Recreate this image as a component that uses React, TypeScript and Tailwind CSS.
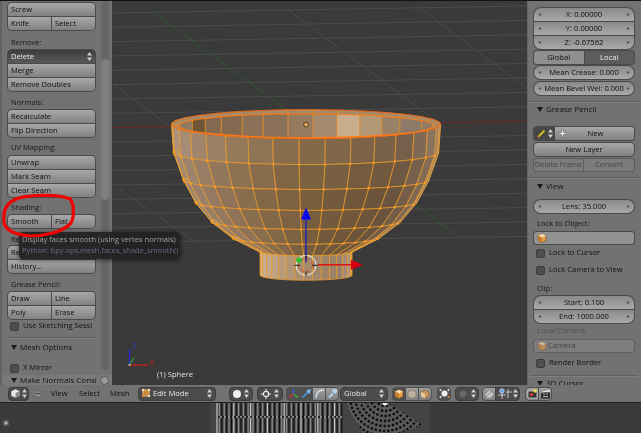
import React from "react";

const BTN = "bg-gradient-to-b from-[#a8a8a8] to-[#828282]";
const NUM = "bg-gradient-to-b from-[#8a8a8a] to-[#a9a9a9]";

function Group({ className = "", children }: { className?: string; children: React.ReactNode }) {
  return (
    <div className={`flex flex-col gap-px bg-[#4a4a4a] rounded-[4px] ring-1 ring-[#4a4a4a] overflow-hidden ${className}`}>
      {children}
    </div>
  );
}

function Btn({ children, center, className = "" }: { children?: React.ReactNode; center?: boolean; className?: string }) {
  return (
    <div
      className={`h-[13px] min-w-0 flex items-center whitespace-nowrap overflow-hidden ${BTN} text-[#0c0c0c] ${
        center ? "justify-center" : "pl-[3px]"
      } ${className}`}
    >
      {children}
    </div>
  );
}

function Row({ children }: { children: React.ReactNode }) {
  return <div className="grid grid-cols-2 gap-px">{children}</div>;
}

function Label({ className = "", children }: { className?: string; children: React.ReactNode }) {
  return <div className={`h-[10px] leading-[10px] pl-[3px] text-[#151515] whitespace-nowrap ${className}`}>{children}</div>;
}

function Check({ className = "", children }: { className?: string; children: React.ReactNode }) {
  return (
    <div className={`h-[10px] flex items-center gap-[4px] text-[#111] whitespace-nowrap ${className}`}>
      <span className="w-[9px] h-[9px] shrink-0 rounded-[2px] bg-[#4e4e4e] border border-[#3c3c3c]" />
      {children}
    </div>
  );
}

function Sep({ className = "" }: { className?: string }) {
  return <div className={`h-px bg-[#5f5f5f] border-b border-[#7f7f7f] box-content ${className}`} />;
}

function Tri() {
  return (
    <svg width="6" height="6" viewBox="0 0 6 6" className="shrink-0">
      <path d="M0 1H6L3 6Z" fill="#1a1a1a" />
    </svg>
  );
}

function Header({ className = "", children }: { className?: string; children: React.ReactNode }) {
  return (
    <div className={`h-[12px] flex items-center gap-[3px] text-[8px] text-[#111] whitespace-nowrap ${className}`}>
      <Tri />
      {children}
    </div>
  );
}

function Num({ children, className = "" }: { children: React.ReactNode; className?: string }) {
  return (
    <div className={`h-[13px] flex items-center justify-between px-[4px] ${NUM} text-[#0c0c0c] whitespace-nowrap ${className}`}>
      <span className="text-[6px] text-[#555]">◂</span>
      <span>{children}</span>
      <span className="text-[6px] text-[#555]">▸</span>
    </div>
  );
}

function Cube({ size = 10, dim = false }: { size?: number; dim?: boolean }) {
  return (
    <svg width={size} height={size} viewBox="0 0 10 10" className={`shrink-0 ${dim ? "opacity-60" : ""}`}>
      <path d="M5 .8 9 2.6V7.4L5 9.4 1 7.4V2.6Z" fill="#e8a04a" stroke="#6b4a20" strokeWidth=".6" />
      <path d="M5 .8 9 2.6 5 4.6 1 2.6Z" fill="#f5dcb4" />
      <path d="M1 2.6 5 4.6V9.4L1 7.4Z" fill="#c97f2d" />
    </svg>
  );
}

function UpDown({ color = "#cfcfcf" }: { color?: string }) {
  return (
    <svg width="5" height="9" viewBox="0 0 5 9" className="shrink-0">
      <path d="M2.5 0 5 3.4H0Z M2.5 9 5 5.6H0Z" fill={color} />
    </svg>
  );
}

const D = "h-[14px] shrink-0 rounded-[4px] bg-[#4c4c4c] border border-[#3e3e3e] flex items-center";
const T = "h-[14px] w-[14px] shrink-0 flex items-center justify-center bg-gradient-to-b from-[#a0a0a0] to-[#808080] border border-[#4f4f4f]";

function LeftPanel() {
  return (
    <div className="w-[112px] h-full flex flex-col bg-[#727272] overflow-hidden border-l-2 border-[#626262]">
      <div className="flex-1 min-h-0 flex overflow-hidden">
        <div className="w-[94px] pl-[6px] pt-[2px] shrink-0 overflow-hidden">
          <Group className="w-[87px]">
            <Btn>Screw</Btn>
            <Row>
              <Btn>Knife</Btn>
              <Btn>Select</Btn>
            </Row>
          </Group>
          <Label className="mt-[7px]">Remove:</Label>
          <Group className="w-[87px] mt-[3px]">
            <div className="h-[13px] flex items-center justify-between px-[3px] bg-gradient-to-b from-[#3d3d3d] to-[#5a5a5a] text-[#eee]">
              Delete
              <UpDown />
            </div>
            <Btn>Merge</Btn>
            <Btn>Remove Doubles</Btn>
          </Group>
          <Label className="mt-[6px]">Normals:</Label>
          <Group className="w-[87px] mt-[3px]">
            <Btn>Recalculate</Btn>
            <Btn>Flip Direction</Btn>
          </Group>
          <Label className="mt-[5px]">UV Mapping:</Label>
          <Group className="w-[87px] mt-[4px]">
            <Btn>Unwrap</Btn>
            <Btn>Mark Seam</Btn>
            <Btn>Clear Seam</Btn>
          </Group>
          <Label className="mt-[5px]">Shading:</Label>
          <Group className="w-[87px] mt-[3px]">
            <Row>
              <Btn>Smooth</Btn>
              <Btn>Flat</Btn>
            </Row>
          </Group>
          <Label className="mt-[6px]">Re</Label>
          <Group className="w-[87px] mt-[2px]">
            <Btn>Re</Btn>
            <Btn>History...</Btn>
          </Group>
          <Label className="mt-[6px]">Grease Pencil:</Label>
          <Group className="w-[87px] mt-[3px]">
            <Row>
              <Btn>Draw</Btn>
              <Btn>Line</Btn>
            </Row>
            <Row>
              <Btn>Poly</Btn>
              <Btn>Erase</Btn>
            </Row>
          </Group>
          <Check className="mt-[2px] pl-[2px]">Use Sketching Sessi</Check>
          <Sep className="mt-[6px] -ml-[2px] w-[92px]" />
          <Header className="mt-[2px] pl-[3px]">Mesh Options</Header>
          <Check className="mt-[10px] pl-[2px]">X Mirror</Check>
        </div>
        <div className="w-[8px] ml-[5px] h-[369px] rounded-[4px] bg-[#666666] overflow-hidden pt-[58px] shrink-0">
          <div className="h-[141px] rounded-[4px] bg-[#7f7f7f]" />
        </div>
      </div>
      <div className="h-[10px] shrink-0 flex items-center gap-[3px] pl-[9px] pr-[3px] bg-[#7a7a7a] text-[8px] text-[#111] whitespace-nowrap overflow-hidden">
        <Tri />
        <span className="flex-1">Make Normals Consi</span>
        <span className="w-[9px] h-[9px] rounded-full bg-[#9a9a9a] border border-[#555] shrink-0" />
      </div>
    </div>
  );
}

function RightPanel() {
  return (
    <div className="w-[114px] h-full bg-[#727272] pl-[6px] pr-[6px] pt-[7px] overflow-hidden border-l border-[#666]">
      <Group className="w-[100px] rounded-[7px]">
        <Num>X: 0.00000</Num>
        <Num>Y: 0.00000</Num>
        <Num>Z: -0.67562</Num>
      </Group>
      <div className="flex gap-px bg-[#4a4a4a] rounded-[3px] ring-1 ring-[#4a4a4a] overflow-hidden mt-[2px] w-[100px]">
        <div className="h-[13px] flex-1 flex items-center justify-center bg-[#8f8f8f] text-[#0c0c0c]">Global</div>
        <div className="h-[13px] flex-1 flex items-center justify-center bg-[#5c5c5c] text-[#eee]">Local</div>
      </div>
      <Group className="w-[100px] rounded-[7px] mt-[2px]">
        <Num>Mean Crease: 0.000</Num>
      </Group>
      <Group className="w-[100px] rounded-[7px] mt-[3px]">
        <Num>Mean Bevel Wei: 0.000</Num>
      </Group>
      <Sep className="mt-[6px] -ml-[4px] w-[108px]" />
      <Header className="pl-[3px]">Grease Pencil</Header>
      <div className="flex ring-1 ring-[#4a4a4a] rounded-[3px] overflow-hidden w-[100px] mt-[12px] h-[13px]">
        <div className="w-[21px] flex items-center justify-center gap-[2px] bg-[#474747]">
          <svg width="9" height="9" viewBox="0 0 9 9">
            <path d="M1 8 7.5 1.5" stroke="#c8c020" strokeWidth="2" />
            <path d="M1 8 2 6" stroke="#e06050" strokeWidth="1.4" />
          </svg>
          <UpDown />
        </div>
        <div className={`flex-1 flex items-center ${BTN} text-[#0c0c0c]`}>
          <svg width="9" height="9" viewBox="0 0 9 9" className="ml-[3px]">
            <path d="M3.5.8H5.5V3.5H8.2V5.5H5.5V8.2H3.5V5.5H.8V3.5H3.5Z" fill="#eee" stroke="#444" strokeWidth=".5" />
          </svg>
          <span className="flex-1 text-center pr-[10px]">New</span>
        </div>
      </div>
      <Group className="w-[100px] mt-[3px]">
        <Btn center>New Layer</Btn>
      </Group>
      <div className="flex gap-px w-[100px] mt-[3px] ring-1 ring-[#5c5c5c] rounded-[3px] overflow-hidden bg-[#5c5c5c]">
        <div className="h-[12px] w-[49px] flex items-center justify-center bg-[#7c7c7c] text-[#444] whitespace-nowrap">Delete Frame</div>
        <div className="h-[12px] flex-1 flex items-center justify-center bg-[#7c7c7c] text-[#444]">Convert</div>
      </div>
      <Sep className="mt-[6px] -ml-[4px] w-[108px]" />
      <Header className="mt-[1px] pl-[3px]">View</Header>
      <Group className="w-[100px] rounded-[7px] mt-[8px]">
        <Num>Lens: 35.000</Num>
      </Group>
      <Label className="mt-[5px]">Lock to Object:</Label>
      <div className="mt-[4px] w-[100px] h-[12px] rounded-[3px] ring-1 ring-[#4a4a4a] bg-[#929292] flex items-center pl-[3px]">
        <Cube />
      </div>
      <Check className="mt-[4px] pl-[2px]">Lock to Cursor</Check>
      <Check className="mt-[7px] pl-[2px]">Lock Camera to View</Check>
      <Label className="mt-[8px]">Clip:</Label>
      <Group className="w-[100px] rounded-[7px] mt-[3px]">
        <Num>Start: 0.100</Num>
        <Num>End: 1000.000</Num>
      </Group>
      <Label className="mt-[2px] text-[#505050]">Local Camera:</Label>
      <div className="mt-[5px] w-[100px] h-[12px] rounded-[3px] ring-1 ring-[#5f5f5f] bg-[#7d7d7d] flex items-center gap-[1px] pl-[3px] text-[#444]">
        <Cube dim />
        Camera
      </div>
      <Check className="mt-[6px] pl-[2px]">Render Border</Check>
      <Sep className="mt-[7px] -ml-[4px] w-[108px]" />
      <Header className="pl-[3px]">3D Cursor</Header>
    </div>
  );
}

const SEG = 32;
const CX = 306;
const ang = (k: number) => ((-3 + 11.25 * k) * Math.PI) / 180;
const RINGS = [
  { r: 135, cy: 123.5, ry: 14.5 },
  { r: 133, cy: 152, ry: 12 },
  { r: 123, cy: 180, ry: 9 },
  { r: 111, cy: 202, ry: 8 },
  { r: 95, cy: 221, ry: 8 },
  { r: 74, cy: 237, ry: 7 },
  { r: 46, cy: 251.5, ry: 4 },
  { r: 46, cy: 275, ry: 5 },
];

const pt = (ring: { r: number; cy: number; ry: number }, k: number): [number, number] => {
  const a = ang(k);
  return [CX + ring.r * Math.sin(a), ring.cy + ring.ry * Math.cos(a)];
};

const STOPS: [number, number[]][] = [
  [-100, [176, 150, 126]],
  [-60, [156, 130, 106]],
  [-30, [140, 112, 82]],
  [0, [124, 97, 66]],
  [30, [114, 90, 62]],
  [50, [110, 88, 68]],
  [70, [130, 108, 88]],
  [100, [164, 140, 118]],
];

function faceColor(deg: number, ringIdx: number) {
  let c = STOPS[STOPS.length - 1][1];
  for (let i = 0; i < STOPS.length - 1; i++) {
    const [d0, c0] = STOPS[i];
    const [d1, c1] = STOPS[i + 1];
    if (deg >= d0 && deg <= d1) {
      const t = (deg - d0) / (d1 - d0);
      c = c0.map((v, j) => v + (c1[j] - v) * t);
      break;
    }
  }
  const boost = ringIdx === 6 ? 42 : ringIdx === 0 ? 8 : ringIdx >= 2 ? -4 : 0;
  return `rgb(${c.map((v) => Math.round(v + boost)).join(",")})`;
}

const INNER = { r: 127, cy: 125, ry: 12 };
const INNER_X = [177, 192, 205, 221, 242, 263, 288, 313, 337, 360, 382, 400, 422, 437];
const INNER_C = ["#8e7a62", "#6f5636", "#846950", "#846950", "#8c7158", "#8a7158", "#957a5d", "#a58a6d", "#c9ae8e", "#b39878", "#9a8268", "#8d7a68", "#8d7a68"];

function Bowl() {
  const faces: React.ReactNode[] = [];
  const edges: React.ReactNode[] = [];
  const dots: React.ReactNode[] = [];
  for (let i = 0; i < RINGS.length - 1; i++) {
    for (let k = 0; k < SEG; k++) {
      const mid = -3 + 11.25 * (k + 0.5);
      const m = ((mid + 180) % 360) - 180;
      if (Math.abs(m) > 100) continue;
      const p = [pt(RINGS[i], k), pt(RINGS[i], k + 1), pt(RINGS[i + 1], k + 1), pt(RINGS[i + 1], k)];
      faces.push(
        <polygon
          key={`f${i}-${k}`}
          points={p.map((q) => q.join(",")).join(" ")}
          fill={faceColor(m, i)}
          stroke="#f0a02c"
          strokeWidth={0.7}
          strokeLinejoin="round"
        />
      );
      if (i > 0 && i < 6 && Math.abs(m) < 90) {
        dots.push(<circle key={`d${i}-${k}`} cx={p[0][0]} cy={p[0][1]} r={1.2} fill="#ff9a1e" />);
      }
    }
  }
  for (let k = 0; k < SEG; k++) {
    const p = [pt(RINGS[0], k), pt(RINGS[0], k + 1), pt(INNER, k + 1), pt(INNER, k)];
    edges.push(
      <polygon
        key={`r${k}`}
        points={p.map((q) => q.join(",")).join(" ")}
        fill="#a38a6c"
        stroke="#f08a1a"
        strokeWidth={0.6}
      />
    );
  }
  return (
    <g>
      {faces}
      {dots}
      <defs>
        <clipPath id="inner">
          <ellipse cx={CX} cy={INNER.cy} rx={INNER.r} ry={INNER.ry} />
        </clipPath>
      </defs>
      {edges}
      <g clipPath="url(#inner)">
        {INNER_C.map((c, i) => (
          <rect key={i} x={INNER_X[i]} y={110} width={INNER_X[i + 1] - INNER_X[i]} height={30} fill={c} />
        ))}
        {INNER_X.map((x, i) => (
          <line key={i} x1={x} y1={110} x2={x} y2={140} stroke="#e8952a" strokeWidth={0.9} />
        ))}
      </g>
      <ellipse cx={CX} cy={RINGS[0].cy} rx={RINGS[0].r} ry={RINGS[0].ry} fill="none" stroke="#e8601a" strokeWidth={0.8} />
      <ellipse cx={CX} cy={INNER.cy} rx={INNER.r} ry={INNER.ry} fill="none" stroke="#ff7a14" strokeWidth={1.1} />
    </g>
  );
}

function ViewportArt() {
  const h = Array.from({ length: 17 }, (_, i) => i);
  const diag = [
    [112, 83, 169, 125],
    [118, 188, 194, 241],
    [287, 8, 445, 127],
    [420, 7, 527, 87],
  ];
  return (
    <svg viewBox="112 0 415 385" className="block w-full h-full">
      {h.map((i) =>
        i === 8 ? null : (
          <line key={i} x1={112} y1={12 + i * 14.375} x2={527} y2={5 + i * 14.44} stroke="#4d4d4d" strokeWidth={0.9} />
        )
      )}
      {diag.map((d, i) => (
        <line key={i} x1={d[0]} y1={d[1]} x2={d[2]} y2={d[3]} stroke="#4d4d4d" strokeWidth={0.9} />
      ))}
      <line x1={112} y1={127} x2={527} y2={120.5} stroke="#6e2a2a" strokeWidth={1} />
      <line x1={153} y1={11} x2={460} y2={237} stroke="#2f5a2f" strokeWidth={1} />
      <Bowl />
      <circle cx={CX} cy={124} r={2.4} fill="#e8a860" stroke="#3a2a10" strokeWidth={0.8} />
      <line x1={306} y1={218} x2={306} y2={262} stroke="#2222bb" strokeWidth={1.4} />
      <path d="M306 207 311 219H301Z" fill="#0808f0" />
      <line x1={318} y1={264.5} x2={353} y2={264.5} stroke="#e01010" strokeWidth={1.4} />
      <path d="M363 264.5 351 259.5V269.5Z" fill="#d80010" />
      <circle cx={306} cy={265} r={10} fill="none" stroke="#f0f0f0" strokeWidth={1} />
      <circle cx={306} cy={265} r={6.5} fill="none" stroke="#d04030" strokeWidth={1} strokeDasharray="3 3" />
      <path d="M294 265H300M312 265H318M306 271V276M306 254V259" stroke="#222" strokeWidth={1} />
      <circle cx={299} cy={260} r={2.8} fill="#30c030" />
      <line x1={129} y1={365} x2={129} y2={349} stroke="#2828d8" strokeWidth={1.2} />
      <line x1={129} y1={365} x2={148} y2={365} stroke="#d81818" strokeWidth={1.2} />
      <line x1={129} y1={365} x2={133} y2={358} stroke="#30b030" strokeWidth={1.2} />
      <circle cx={129} cy={365} r={1} fill="#ccc" />
    </svg>
  );
}

function Toolbar() {
  return (
    <div className="h-[18px] shrink-0 bg-[#727272] border-b border-[#222] flex items-center pl-[8px] text-[#111] whitespace-nowrap">
      <div className={`${D} w-[21px] justify-center gap-[1px]`}>
        <svg width="11" height="11" viewBox="0 0 11 11">
          <path d="M5.5 1 10 3V8L5.5 10 1 8V3Z" fill="#e8e8e8" stroke="#333" strokeWidth=".5" />
          <path d="M5.5 5V10L10 8V3Z" fill="#8a8a8a" />
        </svg>
        <UpDown />
      </div>
      <span className="ml-[5px] w-[8px] h-[8px] shrink-0 rounded-full bg-[#8c8c8c] border border-[#666] flex items-center justify-center">
        <span className="w-[4px] h-px bg-[#444]" />
      </span>
      <span className="ml-[9px] w-[18px] shrink-0">View</span>
      <span className="ml-[10px] w-[21px] shrink-0">Select</span>
      <span className="ml-[10px] w-[18px] shrink-0">Mesh</span>
      <div className={`${D} ml-[10px] w-[78px] pl-[2px] pr-[3px] text-[#e4e4e4] justify-between`}>
        <span className="flex items-center gap-[2px]">
          <svg width="10" height="10" viewBox="0 0 10 10">
            <rect x="2" y="2" width="6" height="6" fill="#c8883c" stroke="#e8c080" strokeWidth="1" />
            <circle cx="2" cy="2" r="1.2" fill="#f0e0c0" />
            <circle cx="8" cy="2" r="1.2" fill="#f0e0c0" />
            <circle cx="2" cy="8" r="1.2" fill="#f08020" />
            <circle cx="8" cy="8" r="1.2" fill="#f0e0c0" />
          </svg>
          Edit Mode
        </span>
        <UpDown />
      </div>
      <div className={`${D} ml-[13px] w-[24px] justify-center gap-[3px]`}>
        <span className="w-[8px] h-[8px] rounded-full bg-[#efefef]" />
        <UpDown />
      </div>
      <div className={`${D} ml-[4px] w-[26px] justify-center gap-[3px]`}>
        <svg width="10" height="10" viewBox="0 0 10 10">
          <circle cx="5" cy="5" r="2.6" fill="none" stroke="#eee" strokeWidth="1.2" />
          <path d="M5 0V2M5 8V10M0 5H2M8 5H10" stroke="#eee" strokeWidth="1" />
        </svg>
        <UpDown />
      </div>
      <div className={`${T} ml-[3px] rounded-l-[4px] !bg-none bg-[#505050]`}>
        <svg width="11" height="11" viewBox="0 0 11 11">
          <path d="M5.5 6V1" stroke="#3060e0" strokeWidth="1.4" />
          <path d="M5.5 6 1 9.5" stroke="#d03030" strokeWidth="1.4" />
          <path d="M5.5 6 10 9.5" stroke="#40b040" strokeWidth="1.4" />
        </svg>
      </div>
      <div className={`${T} -ml-px !bg-none bg-[#505050]`}>
        <svg width="11" height="11" viewBox="0 0 11 11">
          <path d="M1.5 9.5 7 4" stroke="#4a9ae8" strokeWidth="1.6" />
          <path d="M10 1 8.6 6 5 2.4Z" fill="#7cc0f8" />
        </svg>
      </div>
      <div className={`${T} -ml-px`}>
        <svg width="11" height="11" viewBox="0 0 11 11">
          <path d="M2 10C2 5 5 2 10 2" fill="none" stroke="#cfe0ee" strokeWidth="1.5" />
        </svg>
      </div>
      <div className={`${T} -ml-px rounded-r-[4px]`}>
        <svg width="11" height="11" viewBox="0 0 11 11">
          <path d="M2 9.5 6 5.5" stroke="#b8d8f0" strokeWidth="1.8" />
          <path d="M5 3 7 1H10V4L8 6Z" fill="#b8d8f0" />
        </svg>
      </div>
      <div className={`${D} ml-[1px] w-[48px] justify-between px-[3px] text-[#e4e4e4]`}>
        Global
        <UpDown />
      </div>
      <div className="flex shrink-0 ml-[4px]">
        <div className={`${T} rounded-l-[4px] !bg-none bg-[#505050]`}>
          <Cube />
        </div>
        <div className={`${T} -ml-px`}>
          <svg width="10" height="10" viewBox="0 0 10 10">
            <path d="M5 1 9 3V7.5L5 9.5 1 7.5V3Z" fill="#bdb0a0" stroke="#857868" strokeWidth=".7" />
          </svg>
        </div>
        <div className={`${T} -ml-px rounded-r-[4px]`}>
          <svg width="10" height="10" viewBox="0 0 10 10">
            <path d="M5 1 9 3V7.5L5 9.5 1 7.5V3Z" fill="#c89860" stroke="#7a5a30" strokeWidth=".7" />
            <path d="M1 3 5 5V9.5L1 7.5Z" fill="#e8c89c" />
          </svg>
        </div>
      </div>
      <div className={`${T} ml-[5px] rounded-[4px] !bg-none bg-[#505050]`}>
        <svg width="11" height="11" viewBox="0 0 11 11">
          <circle cx="5.5" cy="5.5" r="3" fill="#f0f0f0" />
          <circle cx="1.5" cy="2" r="1" fill="#eee" />
          <circle cx="9.5" cy="2" r="1" fill="#eee" />
          <circle cx="1.5" cy="9" r="1" fill="#eee" />
          <circle cx="9.5" cy="9" r="1" fill="#f09030" />
        </svg>
      </div>
      <div className={`${D} ml-[4px] w-[24px] justify-center gap-[4px]`}>
        <span className="w-[8px] h-[8px] rounded-full bg-[#6a6a6a] border border-[#555]" />
        <UpDown />
      </div>
      <div className={`${T} ml-[3px] rounded-l-[4px]`}>
        <svg width="10" height="10" viewBox="0 0 10 10">
          <path d="M3 8.5 8 3.5M5 9 9 5M1.5 6.5 6 2" stroke="#dcdcdc" strokeWidth="1.1" fill="none" />
        </svg>
      </div>
      <div className={`${D} -ml-px w-[25px] rounded-l-none justify-center gap-[1px]`}>
        <svg width="14" height="11" viewBox="0 0 14 11">
          <circle cx="4" cy="3" r="2.2" fill="#5aa0f0" stroke="#eee" strokeWidth=".7" />
          <path d="M0 7H8M4 5V11M10 1V10M8 4H14" stroke="#e0e0e0" strokeWidth=".8" />
        </svg>
        <UpDown />
      </div>
      <div className={`${T} ml-[5px] rounded-l-[4px]`}>
        <svg width="11" height="10" viewBox="0 0 11 10">
          <rect x="1" y="2" width="9" height="7" fill="#333" stroke="#ddd" strokeWidth=".7" />
          <circle cx="8" cy="2" r="1.8" fill="#f0d840" />
          <rect x="3" y="4" width="3" height="3" fill="#c04030" />
        </svg>
      </div>
      <div className={`${T} -ml-px rounded-r-[4px]`}>
        <svg width="11" height="10" viewBox="0 0 11 10">
          <rect x="1" y="3.5" width="9" height="6" fill="#2c2c2c" />
          <path d="M1 3 10 .8V2.4L1 3.5Z" fill="#eee" />
          <path d="M3 5H5M6 5H8M3 7.5H8" stroke="#ddd" strokeWidth=".8" />
        </svg>
      </div>
    </div>
  );
}

function Timeline() {
  const v: number[] = [];
  for (let x = 217; x < 343; x += 2.4) v.push(x);
  return (
    <svg viewBox="0 403 641 30" className="block w-full flex-1 min-h-0 bg-[#3a3a3a]">
      <rect x={210} y={403} width={220} height={30} fill="#444444" />
      {v.map((x, i) => (
        <line
          key={i}
          x1={x}
          y1={403}
          x2={x}
          y2={433}
          stroke={i % 7 === 0 ? "#c8c8c8" : i % 2 === 0 ? "#111111" : "#8a8a8a"}
          strokeWidth={1.2}
        />
      ))}
      <line x1={216} y1={417} x2={342} y2={417} stroke="#111" strokeWidth={1.6} />
      <line x1={216} y1={417} x2={342} y2={417} stroke="#f0f0f0" strokeWidth={1} strokeDasharray="2 2" />
      <clipPath id="fan">
        <polygon points="347,403 388,403 423,425 400,433 363,433 347,407" />
      </clipPath>
      <g clipPath="url(#fan)">
        <rect x={340} y={403} width={90} height={30} fill="#5a5a5a" />
        {[6, 10, 15, 20, 25, 30, 35, 40, 45, 50].map((r) => (
          <circle key={r} cx={385} cy={396} r={r} fill="none" stroke="#0e0e0e" strokeWidth={2.4} strokeDasharray="2.4 1.8" />
        ))}
      </g>
      <circle cx={385} cy={403} r={2.5} fill="#eee" />
      <circle cx={6} cy={423} r={3.5} fill="#555" />
      <path d="M4 423H8M6 421V425" stroke="#ccc" strokeWidth={1} />
    </svg>
  );
}

export default function App() {
  return (
    <div
      className="relative w-[641px] h-[433px] overflow-hidden bg-[#3a3a3a] flex flex-col text-[7.6px] blur-[0.4px]"
      style={{ fontFamily: '"Open Sans", "DejaVu Sans", sans-serif' }}
    >
      <div className="h-px shrink-0 bg-[#111]" />
      <div className="h-[384px] shrink-0 flex">
        <LeftPanel />
        <div className="flex-1 min-w-0 relative bg-[#3a3a3a]">
          <ViewportArt />
          <span className="absolute left-[21px] top-[340px] text-[7px] text-[#3a3ad8]">Z</span>
          <span className="absolute left-[38px] top-[357px] text-[7px] text-[#d82020]">X</span>
          <span className="absolute left-[45px] top-[368px] text-[#e0e0e0]">(1) Sphere</span>
        </div>
        <RightPanel />
      </div>
      <Toolbar />
      <Timeline />
      <div className="absolute left-[19px] top-[232px] w-[161px] h-[27px] rounded-[4px] bg-[#222222]/95 shadow-[0_1px_5px_rgba(0,0,0,0.6)] px-[3px] pt-[2px] text-[7.5px] leading-[11px] whitespace-nowrap">
        <div className="text-[#a0a0a0]">Display faces smooth (using vertex normals)</div>
        <div className="text-[#68688a]">Python: bpy.ops.mesh.faces_shade_smooth()</div>
      </div>
      <svg viewBox="0 0 100 240" className="absolute left-0 top-0 w-[100px] h-[240px] pointer-events-none">
        <path
          d="M14 200C25 194 60 194 70 199 75 205 74 220 70 224 62 232 45 236 30 236 20 235 5 232 4 222 3 212 5 205 14 200"
          fill="none"
          stroke="#f00000"
          strokeWidth={3.2}
          strokeLinecap="round"
        />
      </svg>
    </div>
  );
}
